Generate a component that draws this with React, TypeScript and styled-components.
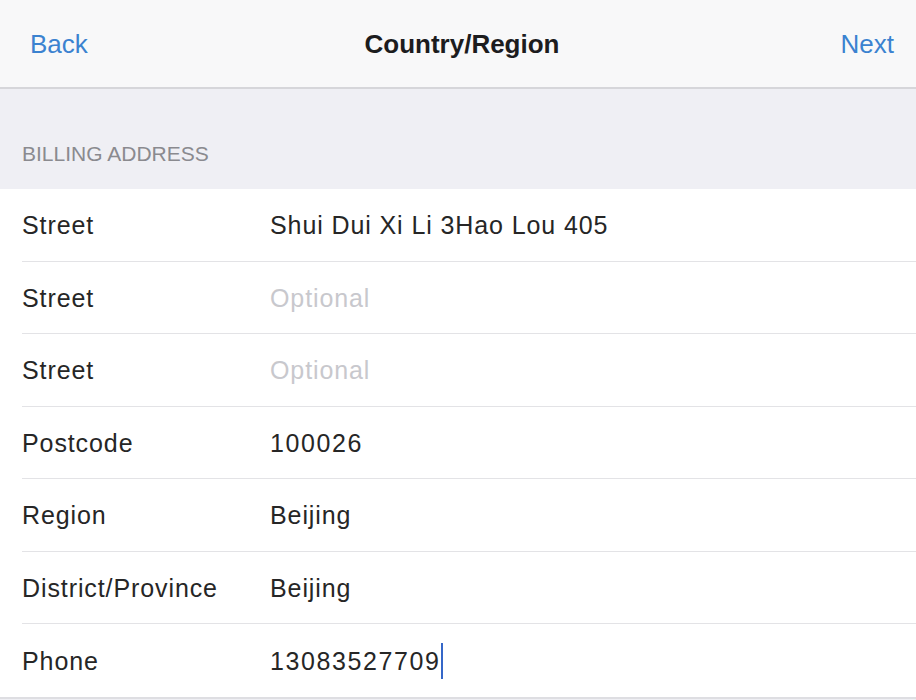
import styled, { createGlobalStyle } from 'styled-components'

const GlobalStyle = createGlobalStyle`
    html, body {
        margin: 0;
        padding: 0;
        background: #efeff4;
    }
    body {
        font-family: "Liberation Sans", Arial, sans-serif;
        -webkit-font-smoothing: antialiased;
    }
`

const Screen = styled.div`
    width: 916px;
    height: 700px;
    overflow: hidden;
    background: #efeff4;
    display: flex;
    flex-direction: column;
`

const NavBar = styled.div`
    height: 89px;
    flex-shrink: 0;
    background: #f8f8f9;
    border-bottom: 2px solid #d6d6da;
    box-sizing: border-box;
    display: grid;
    grid-template-columns: 1fr auto 1fr;
    align-items: center;
    padding: 2px 22px 0 30px;
`

const NavButton = styled.span<{ $align: 'left' | 'right' }>`
    color: #3b82d0;
    font-size: 26px;
    justify-self: ${p => (p.$align === 'left' ? 'start' : 'end')};
`

const NavTitle = styled.span`
    color: #1c1c1e;
    font-size: 26px;
    font-weight: bold;
`

const SectionHeader = styled.div`
    height: 100px;
    flex-shrink: 0;
    box-sizing: border-box;
    display: flex;
    align-items: flex-end;
    padding: 0 22px 23px;
    color: #8a8a8f;
    font-size: 21px;
`

const List = styled.div`
    background: #ffffff;
    display: flex;
    flex-direction: column;
    border-bottom: 2px solid #dedee2;
`

const Row = styled.div<{ $last?: boolean }>`
    height: 72.5px;
    margin-left: 22px;
    box-sizing: border-box;
    display: grid;
    grid-template-columns: 248px 1fr;
    align-items: center;
    padding-top: 2px;
    border-bottom: ${p => (p.$last ? 'none' : '1.5px solid #e3e3e6')};
`

const Label = styled.span`
    color: #262626;
    font-size: 25px;
    letter-spacing: 0.9px;
`

const Value = styled.span<{ $placeholder?: boolean; $digits?: boolean }>`
    color: ${p => (p.$placeholder ? '#c8c8cd' : '#262626')};
    font-size: 25px;
    letter-spacing: ${p => (p.$digits ? '1.6px' : '0.9px')};
    display: flex;
    align-items: center;
`

const Caret = styled.span`
    display: inline-block;
    width: 2px;
    height: 36px;
    background: #3567c8;
`

interface Field {
    label: string
    value: string
    placeholder?: boolean
    focused?: boolean
    digits?: boolean
}

const fields: Field[] = [
    { label: 'Street', value: 'Shui Dui Xi Li 3Hao Lou 405' },
    { label: 'Street', value: 'Optional', placeholder: true },
    { label: 'Street', value: 'Optional', placeholder: true },
    { label: 'Postcode', value: '100026', digits: true },
    { label: 'Region', value: 'Beijing' },
    { label: 'District/Province', value: 'Beijing' },
    { label: 'Phone', value: '13083527709', focused: true, digits: true },
]

export default function App() {
    return (
        <>
            <GlobalStyle />
            <Screen>
                <NavBar>
                    <NavButton $align="left">Back</NavButton>
                    <NavTitle>Country/Region</NavTitle>
                    <NavButton $align="right">Next</NavButton>
                </NavBar>
                <SectionHeader>BILLING ADDRESS</SectionHeader>
                <List>
                    {fields.map((f, i) => (
                        <Row key={i} $last={i === fields.length - 1}>
                            <Label>{f.label}</Label>
                            <Value $placeholder={f.placeholder} $digits={f.digits}>
                                {f.value}
                                {f.focused && <Caret />}
                            </Value>
                        </Row>
                    ))}
                </List>
            </Screen>
        </>
    )
}
